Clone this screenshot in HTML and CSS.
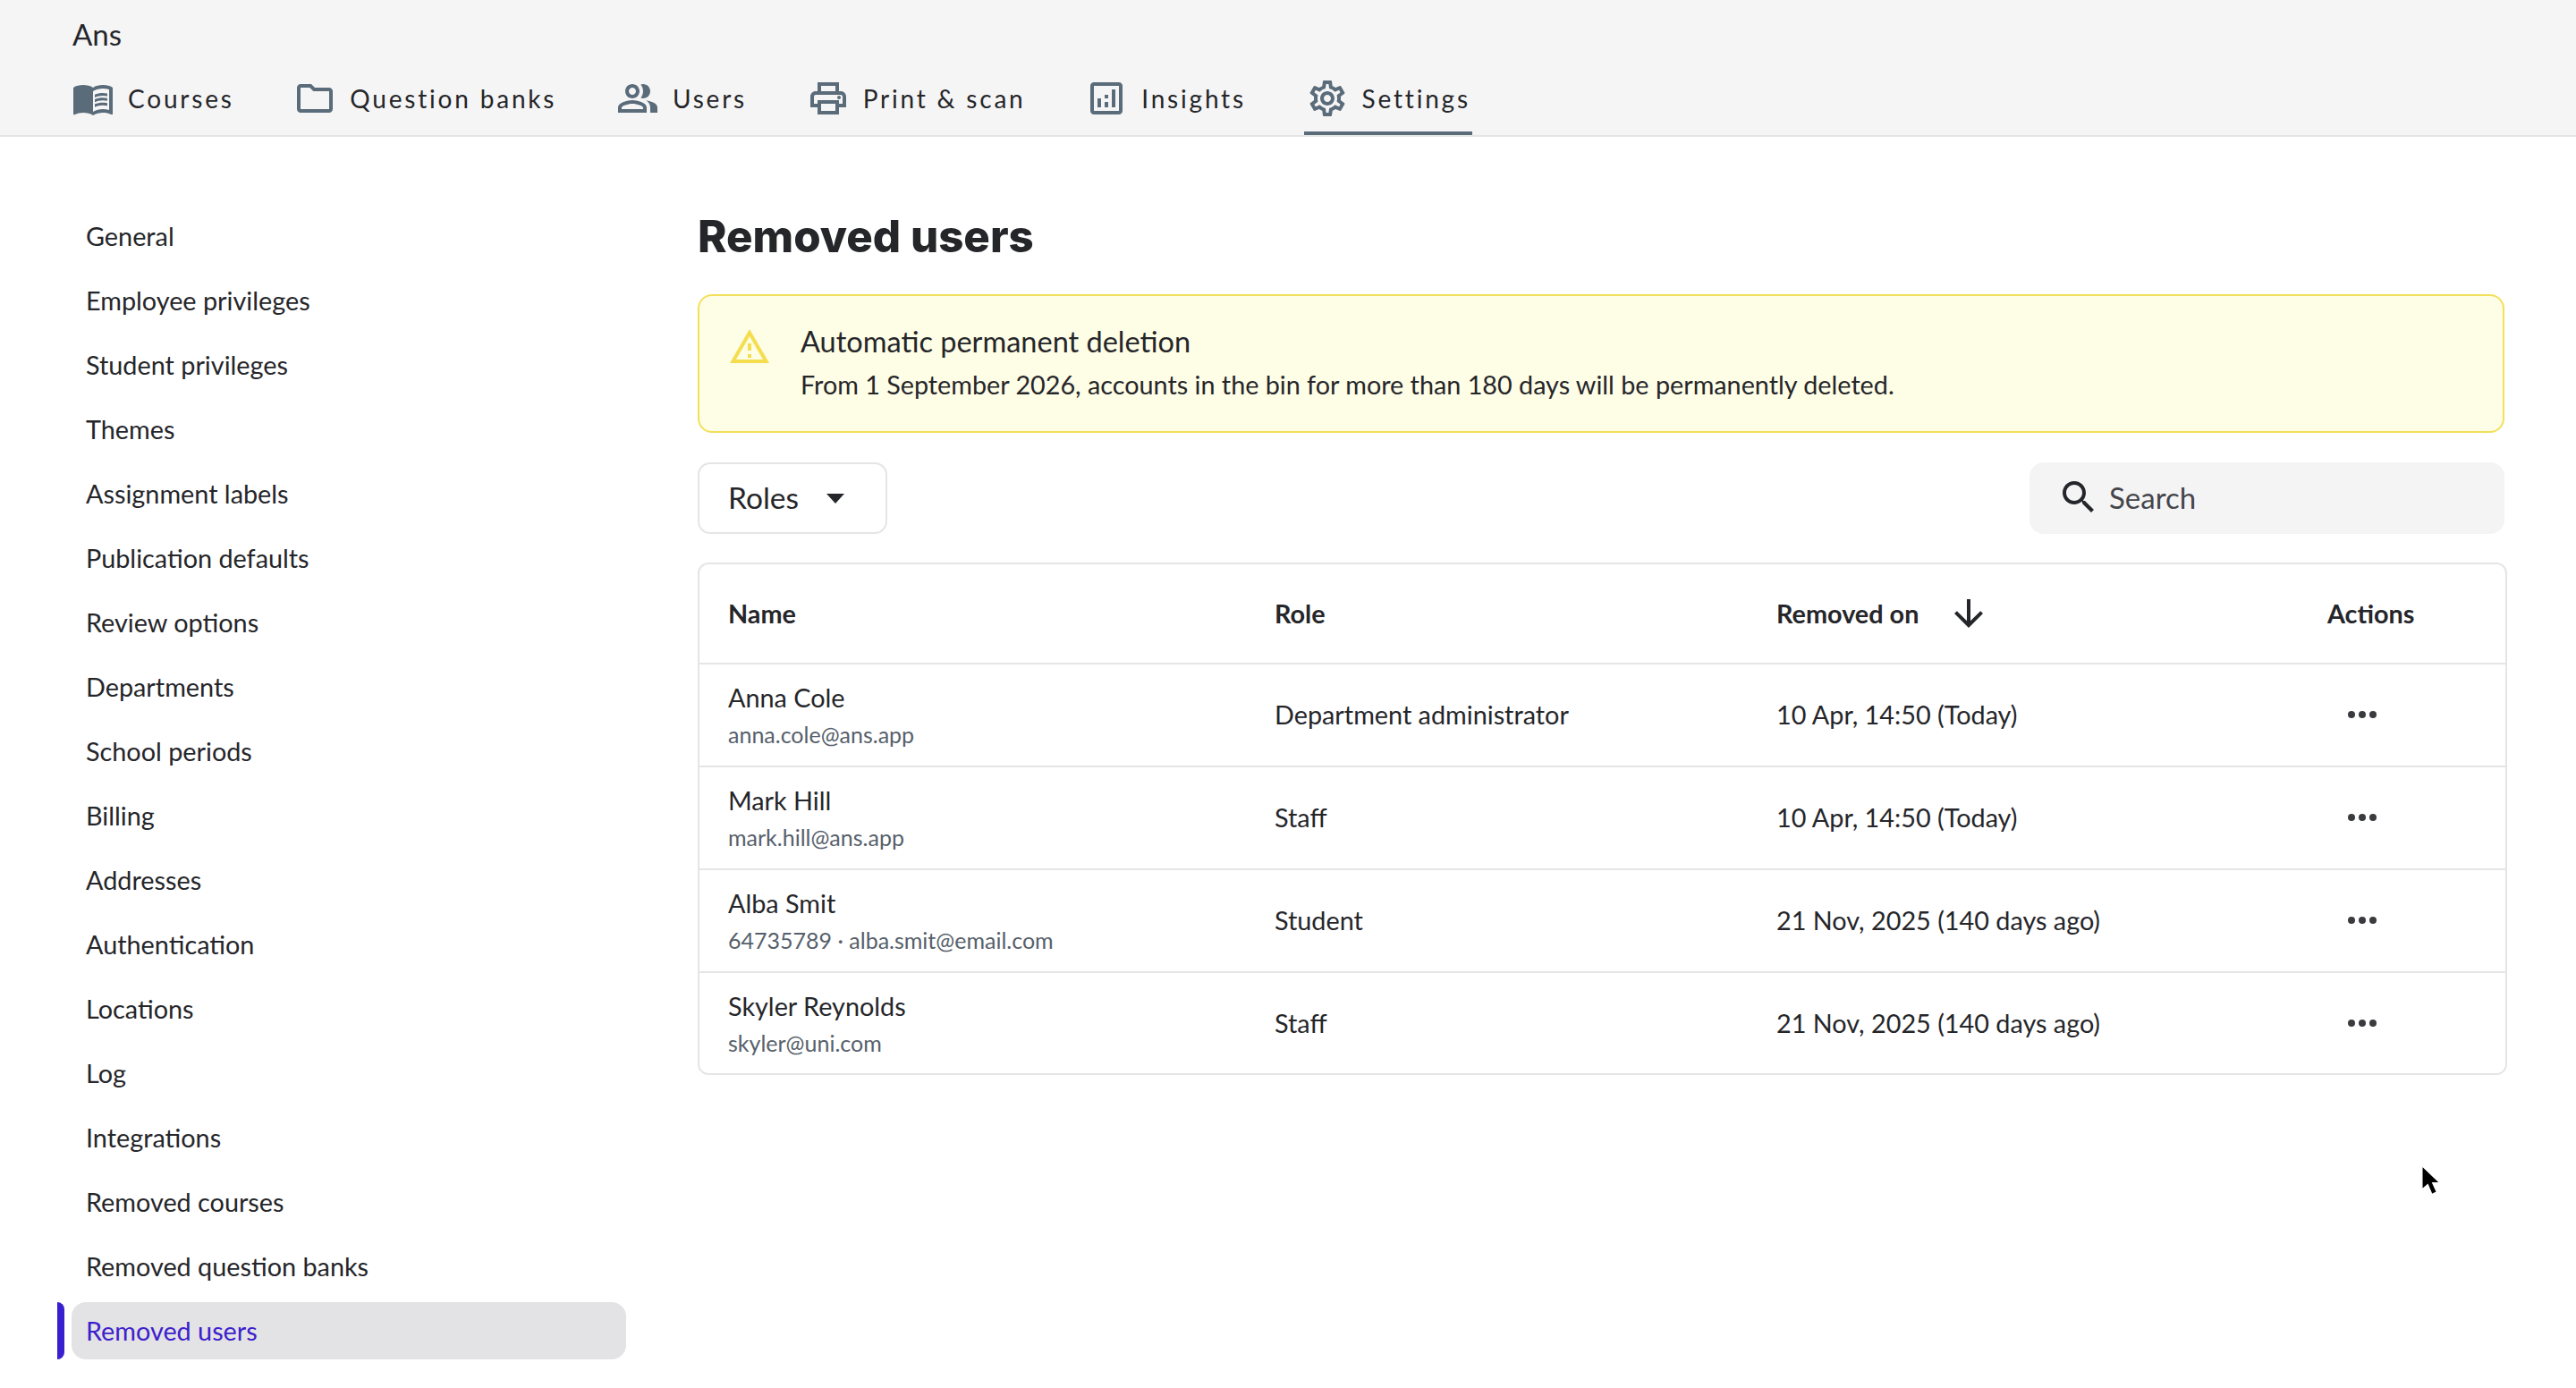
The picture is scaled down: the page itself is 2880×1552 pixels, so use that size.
FILE: index.html
```html
<!DOCTYPE html>
<html lang="en">
<head>
  <meta charset="UTF-8" />
  <title>Removed users</title>
  <link rel="stylesheet" href="styles.css">
</head>
<body>
  <div class="header">
    <div class="brand">Ans</div>
    <div class="tabs">
      <div class="tab">
        <svg class="icon" viewBox="0 0 24 24"><path d="M21 5c-1.11-.35-2.33-.5-3.5-.5-1.95 0-4.05.4-5.5 1.5-1.45-1.1-3.55-1.5-5.5-1.5S2.45 4.9 1 6v14.65c0 .25.25.5.5.5.1 0 .15-.05.25-.05C3.1 20.45 5.05 20 6.5 20c1.95 0 4.05.4 5.5 1.5 1.35-.85 3.8-1.5 5.5-1.5 1.65 0 3.35.3 4.75 1.05.1.05.15.05.25.05.25 0 .5-.25.5-.5V6c-.6-.45-1.25-.75-2-1zm0 13.5c-1.1-.35-2.3-.5-3.5-.5-1.7 0-4.15.65-5.5 1.5V8c1.35-.85 3.8-1.5 5.5-1.5 1.2 0 2.4.15 3.5.5v11.5z"/><path d="M17.5 10.5c.88 0 1.73.09 2.5.26V9.24c-.79-.15-1.64-.24-2.5-.24-1.7 0-3.24.29-4.5.83v1.66c1.13-.64 2.7-.99 4.5-.99zM13 12.49v1.66c1.13-.64 2.7-.99 4.5-.99.88 0 1.73.09 2.5.26V11.9c-.79-.15-1.64-.24-2.5-.24-1.7 0-3.24.3-4.5.83zm4.5 1.84c-1.7 0-3.24.29-4.5.83v1.66c1.13-.64 2.7-.99 4.5-.99.88 0 1.73.09 2.5.26v-1.52c-.79-.16-1.64-.24-2.5-.24z"/></svg>
        <span>Courses</span>
      </div>
      <div class="tab">
        <svg class="icon" viewBox="0 0 24 24"><path d="M9.17 6l2 2H20v10H4V6h5.17M10 4H4c-1.1 0-1.99.9-1.99 2L2 18c0 1.1.9 2 2 2h16c1.1 0 2-.9 2-2V8c0-1.1-.9-2-2-2h-8l-2-2z"/></svg>
        <span>Question banks</span>
      </div>
      <div class="tab">
        <svg class="icon" viewBox="0 0 24 24"><path d="M16.67 13.13C18.04 14.06 19 15.32 19 17v3h4v-3c0-2.18-3.57-3.47-6.33-3.87z"/><path d="M15 12c2.21 0 4-1.79 4-4s-1.79-4-4-4c-.47 0-.91.1-1.33.24C14.5 5.27 15 6.58 15 8s-.5 2.73-1.33 3.76c.42.14.86.24 1.33.24z"/><path d="M9 12c2.21 0 4-1.79 4-4s-1.79-4-4-4-4 1.79-4 4 1.79 4 4 4zm0-6c1.1 0 2 .9 2 2s-.9 2-2 2-2-.9-2-2 .9-2 2-2z"/><path d="M9 13c-2.67 0-8 1.34-8 4v3h16v-3c0-2.66-5.33-4-8-4zm6 5H3v-.99C3.2 16.29 6.3 15 9 15s5.8 1.29 6 2v1z"/></svg>
        <span>Users</span>
      </div>
      <div class="tab">
        <svg class="icon" viewBox="0 0 24 24"><path d="M19 8h-1V3H6v5H5c-1.66 0-3 1.34-3 3v6h4v4h12v-4h4v-6c0-1.66-1.34-3-3-3zM8 5h8v3H8V5zm8 12v2H8v-4h8v2zm2-2v-2H6v2H4v-4c0-.55.45-1 1-1h14c.55 0 1 .45 1 1v4h-2z"/><circle cx="18" cy="11.5" r="1"/></svg>
        <span>Print &amp; scan</span>
      </div>
      <div class="tab">
        <svg class="icon" viewBox="0 0 24 24"><path d="M19 3H5c-1.1 0-2 .9-2 2v14c0 1.1.9 2 2 2h14c1.1 0 2-.9 2-2V5c0-1.1-.9-2-2-2zm0 16H5V5h14v14z"/><path d="M7 12h2v5H7zm8-5h2v10h-2zm-4 7h2v3h-2zm0-4h2v2h-2z"/></svg>
        <span>Insights</span>
      </div>
      <div class="tab active">
        <svg class="icon" viewBox="0 0 24 24"><path d="M19.43 12.98c.04-.32.07-.64.07-.98 0-.34-.03-.66-.07-.98l2.11-1.65c.19-.15.24-.42.12-.64l-2-3.46c-.09-.16-.26-.25-.44-.25-.06 0-.12.01-.17.03l-2.49 1c-.52-.4-1.08-.73-1.69-.98l-.38-2.65C14.46 2.18 14.25 2 14 2h-4c-.25 0-.46.18-.49.42l-.38 2.65c-.61.25-1.17.59-1.69.98l-2.49-1c-.06-.02-.12-.03-.18-.03-.17 0-.34.09-.43.25l-2 3.46c-.13.22-.07.49.12.64l2.11 1.65c-.04.32-.07.65-.07.98 0 .33.03.66.07.98l-2.11 1.65c-.19.15-.24.42-.12.64l2 3.46c.09.16.26.25.44.25.06 0 .12-.01.17-.03l2.49-1c.52.4 1.08.73 1.69.98l.38 2.65c.03.24.24.42.49.42h4c.25 0 .46-.18.49-.42l.38-2.65c.61-.25 1.17-.59 1.69-.98l2.49 1c.06.02.12.03.18.03.17 0 .34-.09.43-.25l2-3.46c.12-.22.07-.49-.12-.64l-2.11-1.65zm-1.98-1.71c.04.31.05.52.05.73 0 .21-.02.43-.05.73l-.14 1.13.89.7 1.08.84-.7 1.21-1.27-.51-1.04-.42-.9.68c-.43.32-.84.56-1.25.73l-1.06.43-.16 1.13-.2 1.35h-1.4l-.19-1.35-.16-1.13-1.06-.43c-.43-.18-.83-.41-1.23-.71l-.91-.7-1.06.43-1.27.51-.7-1.21 1.08-.84.89-.7-.14-1.13c-.03-.31-.05-.54-.05-.74s.02-.43.05-.73l.14-1.13-.89-.7-1.08-.84.7-1.21 1.27.51 1.04.42.9-.68c.43-.32.84-.56 1.25-.73l1.06-.43.16-1.13.2-1.35h1.39l.19 1.35.16 1.13 1.06.43c.43.18.83.41 1.23.71l.91.7 1.06-.43 1.27-.51.7 1.21-1.07.85-.89.7.14 1.13zM12 8c-2.21 0-4 1.79-4 4s1.79 4 4 4 4-1.79 4-4-1.79-4-4-4zm0 6c-1.1 0-2-.9-2-2s.9-2 2-2 2 .9 2 2-.9 2-2 2z"/></svg>
        <span>Settings</span>
      </div>
    </div>
  </div>

  <div class="page">
    <div class="sidebar">
      <div class="side-item">General</div>
      <div class="side-item">Employee privileges</div>
      <div class="side-item">Student privileges</div>
      <div class="side-item">Themes</div>
      <div class="side-item">Assignment labels</div>
      <div class="side-item">Publication defaults</div>
      <div class="side-item">Review options</div>
      <div class="side-item">Departments</div>
      <div class="side-item">School periods</div>
      <div class="side-item">Billing</div>
      <div class="side-item">Addresses</div>
      <div class="side-item">Authentication</div>
      <div class="side-item">Locations</div>
      <div class="side-item">Log</div>
      <div class="side-item">Integrations</div>
      <div class="side-item">Removed courses</div>
      <div class="side-item">Removed question banks</div>
      <div class="side-item active">Removed users</div>
    </div>

    <div class="main">
      <h1 class="title">Removed users</h1>

      <div class="alert">
        <svg class="alert-icon" viewBox="0 0 24 24"><path d="M12 5.99L19.53 19H4.47L12 5.99M12 2L1 21h22L12 2zm1 14h-2v2h2v-2zm0-6h-2v4h2v-4z"/></svg>
        <div>
          <div class="alert-title">Automatic permanent deletion</div>
          <div class="alert-text">From 1 September 2026, accounts in the bin for more than 180 days will be permanently deleted.</div>
        </div>
      </div>

      <div class="toolbar">
        <div class="roles">
          <span>Roles</span>
          <svg class="caret" viewBox="0 0 20 11"><path d="M0 0h20L10 11z"/></svg>
        </div>
        <div class="search">
          <svg class="search-icon" viewBox="0 0 24 24"><path d="M15.5 14h-.79l-.28-.27C15.41 12.59 16 11.11 16 9.5 16 5.91 13.09 3 9.5 3S3 5.91 3 9.5 5.91 16 9.5 16c1.61 0 3.09-.59 4.23-1.57l.27.28v.79l5 4.99L20.49 19l-4.99-5zm-6 0C7.01 14 5 11.99 5 9.5S7.01 5 9.5 5 14 7.01 14 9.5 11.99 14 9.5 14z"/></svg>
          <span>Search</span>
        </div>
      </div>

      <div class="table">
        <div class="row head">
          <div>Name</div>
          <div>Role</div>
          <div class="sort">Removed on
            <svg class="arrow" viewBox="0 0 24 24"><path d="M20 12l-1.41-1.41L13 16.17V4h-2v12.17l-5.58-5.59L4 12l8 8 8-8z"/></svg>
          </div>
          <div>Actions</div>
        </div>
        <div class="row">
          <div><div class="name">Anna Cole</div><div class="email">anna.cole@ans.app</div></div>
          <div>Department administrator</div>
          <div>10 Apr, 14:50 (Today)</div>
          <svg class="dots" viewBox="0 0 24 24"><circle cx="6" cy="12" r="2"/><circle cx="12" cy="12" r="2"/><circle cx="18" cy="12" r="2"/></svg>
        </div>
        <div class="row">
          <div><div class="name">Mark Hill</div><div class="email">mark.hill@ans.app</div></div>
          <div>Staff</div>
          <div>10 Apr, 14:50 (Today)</div>
          <svg class="dots" viewBox="0 0 24 24"><circle cx="6" cy="12" r="2"/><circle cx="12" cy="12" r="2"/><circle cx="18" cy="12" r="2"/></svg>
        </div>
        <div class="row">
          <div><div class="name">Alba Smit</div><div class="email">64735789 · alba.smit@email.com</div></div>
          <div>Student</div>
          <div>21 Nov, 2025 (140 days ago)</div>
          <svg class="dots" viewBox="0 0 24 24"><circle cx="6" cy="12" r="2"/><circle cx="12" cy="12" r="2"/><circle cx="18" cy="12" r="2"/></svg>
        </div>
        <div class="row">
          <div><div class="name">Skyler Reynolds</div><div class="email">skyler@uni.com</div></div>
          <div>Staff</div>
          <div>21 Nov, 2025 (140 days ago)</div>
          <svg class="dots" viewBox="0 0 24 24"><circle cx="6" cy="12" r="2"/><circle cx="12" cy="12" r="2"/><circle cx="18" cy="12" r="2"/></svg>
        </div>
      </div>
    </div>
  </div>

  <svg class="cursor" viewBox="0 0 24 38"><path d="M2 1v29l7-6 5 12 6-3-5-11h9z"/></svg>
</body>
</html>
```

FILE: styles.css
```css
* {
  margin: 0;
  padding: 0;
  box-sizing: border-box;
}

body {
  font-family: 'Lato', 'Noto Sans', sans-serif;
  background: #fff;
  color: #25262a;
  height: 1552px;
  overflow: hidden;
  font-size: 28.8px;
}

.header {
  background: #f5f5f5;
  border-bottom: 2px solid #e5e5e5;
  height: 153px;
  padding-left: 81px;
}

.brand {
  font-size: 33px;
  line-height: 40px;
  padding-top: 18px;
  height: 79px;
}

.tabs {
  display: flex;
  gap: 62.7px;
  margin-left: -3px;
}

.tab {
  display: flex;
  align-items: center;
  gap: 15px;
  height: 72px;
  padding: 0 2px 6px 2px;
  font-size: 28px;
  letter-spacing: 2.8px;
  border-bottom: 4px solid transparent;
}

.tab.active {
  border-bottom-color: #5a6b7a;
}

.icon {
  width: 48px;
  height: 48px;
  fill: #5a6b7a;
}

.page {
  display: flex;
  padding-top: 75px;
}

.sidebar {
  width: 780px;
  padding: 4px 0 0 80px;
  flex-shrink: 0;
}

.side-item {
  width: 620px;
  height: 64px;
  line-height: 64px;
  margin-bottom: 8px;
  padding-left: 16px;
  border-radius: 16px;
  position: relative;
}

.side-item.active {
  background: #e3e3e5;
  color: #3d20cc;
}

.side-item.active::before {
  content: "";
  position: absolute;
  left: -16px;
  top: 0;
  bottom: 0;
  width: 8px;
  background: #3a1fd1;
  border-radius: 0 8px 8px 0;
}

.main {
  width: 2023px;
}

.title {
  font-family: 'Inter', sans-serif;
  font-size: 49.2px;
  font-weight: 800;
  line-height: 73px;
  height: 101px;
}

.alert {
  width: 2020px;
  height: 155px;
  background: #fefde6;
  border: 2px solid #f2e05a;
  border-radius: 16px;
  display: flex;
  align-items: flex-start;
  padding: 29px 0 0 32px;
  gap: 33px;
}

.alert-icon {
  width: 48px;
  height: 48px;
  fill: #f5de4e;
  flex-shrink: 0;
  margin-top: 4px;
}

.alert-title {
  font-size: 32.5px;
  line-height: 44px;
}

.alert-text {
  font-size: 28.75px;
  line-height: 44px;
  margin-top: 4px;
}

.toolbar {
  width: 2020px;
  display: flex;
  justify-content: space-between;
  margin-top: 33px;
}

.roles {
  width: 212px;
  height: 80px;
  border: 2px solid #e5e5e5;
  border-radius: 14px;
  display: flex;
  align-items: center;
  padding: 0 0 2px 32px;
  gap: 31px;
  font-size: 33.5px;
}

.caret {
  width: 20px;
  height: 11px;
  fill: #25262a;
  margin-top: 2px;
}

.search {
  width: 531px;
  height: 80px;
  background: #f4f4f5;
  border-radius: 16px;
  display: flex;
  align-items: center;
  padding: 0 0 2px 31px;
  gap: 10px;
  font-size: 33px;
  color: #45464b;
}

.search-icon {
  width: 48px;
  height: 48px;
  fill: #25262a;
}

.table {
  margin-top: 32px;
  border: 2px solid #e5e5e5;
  border-radius: 12px;
}

.row {
  display: grid;
  grid-template-columns: 611px 561px 616px 1fr;
  align-items: center;
  height: 115px;
  padding: 0 0 1px 32px;
  border-bottom: 2px solid #e5e5e5;
}

.row:last-child {
  border-bottom: none;
  height: 112px;
  padding-bottom: 0;
}

.head {
  height: 112px;
  font-weight: 700;
}

.sort {
  display: flex;
  align-items: center;
  gap: 32px;
}

.arrow {
  width: 48px;
  height: 48px;
  fill: #25262a;
}

.name {
  line-height: 40px;
}

.email {
  font-size: 25px;
  line-height: 36px;
  margin-top: 3px;
  color: #56606b;
}

.dots {
  width: 48px;
  height: 48px;
  fill: #3a3b3f;
  margin-left: 15px;
}

.cursor {
  position: absolute;
  left: 2706px;
  top: 1302px;
  width: 22px;
  height: 36px;
  fill: #000;
  stroke: #fff;
  stroke-width: 1.5px;
}
```
